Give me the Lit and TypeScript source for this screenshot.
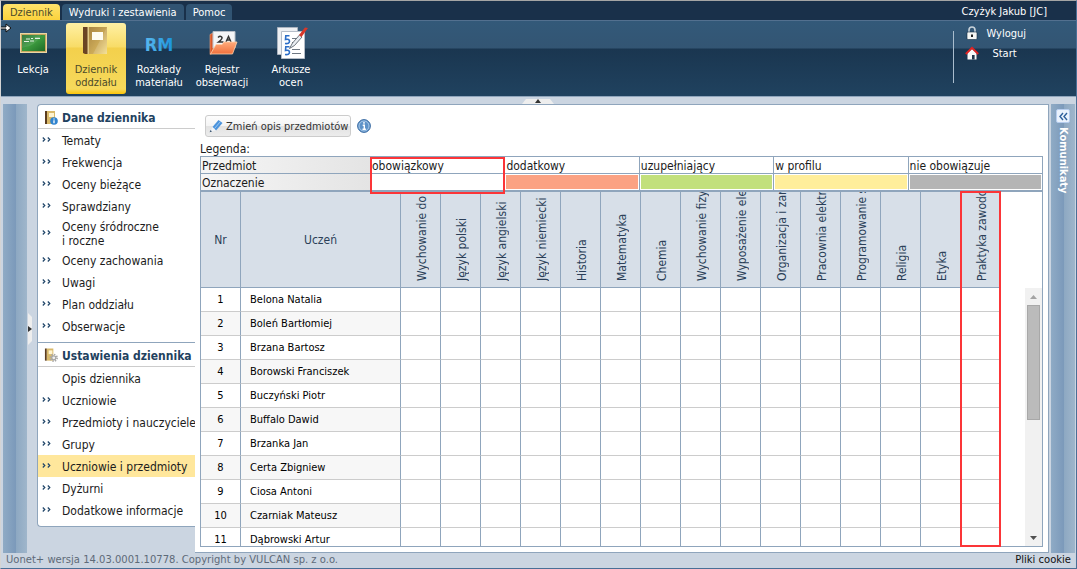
import { LitElement, html, css, svg } from "lit";
import { customElement, state } from "lit/decorators.js";
import { classMap } from "lit/directives/class-map.js";

const boardIcon = svg`<svg width="34" height="34" viewBox="0 0 34 34">
  <defs><linearGradient id="bg" x1="0" y1="0" x2="1" y2="1"><stop offset="0" stop-color="#1f6a2c"/><stop offset=".5" stop-color="#3c9a3e"/><stop offset="1" stop-color="#1d6b26"/></linearGradient></defs>
  <rect x="4" y="7" width="27" height="20" fill="#c9a860"/><rect x="4.500" y="7.500" width="26" height="19" fill="none" stroke="#e8d6a4"/>
  <rect x="6" y="9" width="23" height="16" fill="url(#bg)"/><path d="M6 22Q20 20 25 9H6Z" fill="#fff" opacity=".1"/>
  <path d="M10 13h4m1-.5h2m2-.2h5M8 15.500h5m1-.5h4" stroke="#e5f2e4" stroke-width="1.200"/></svg>`;

const bookIcon = svg`<svg width="34" height="34" viewBox="0 0 34 34">
  <defs><linearGradient id="bk" x1="0" y1="0" x2="1" y2="1"><stop offset="0" stop-color="#a88442"/><stop offset=".6" stop-color="#cdab58"/><stop offset="1" stop-color="#f3dc86"/></linearGradient></defs>
  <path d="M4 1h5v27H6L4 27Z" fill="#6b4423"/><path d="M9 1h19v27H9Z" fill="url(#bk)"/><path d="M8.500 1h1.500v27H8.500Z" fill="#e3cb88"/>
  <path d="M28 1 14 28h14Z" fill="#fff" opacity=".15"/><rect x="13" y="6" width="11" height="8" fill="#fffdf2"/></svg>`;

const rmIcon = svg`<svg width="34" height="34" viewBox="0 0 34 34">
  <defs><linearGradient id="rm"><stop offset="0" stop-color="#5bb9ee"/><stop offset="1" stop-color="#1b93dc"/></linearGradient></defs>
  <text class="rm" x="17" y="25" text-anchor="middle" fill="url(#rm)">RM</text></svg>`;

const folderIcon = svg`<svg width="34" height="34" viewBox="0 0 34 34">
  <defs><linearGradient id="fo" x1="0" y1="0" x2="0" y2="1"><stop offset="0" stop-color="#ffab7c"/><stop offset="1" stop-color="#f0703c"/></linearGradient></defs>
  <path d="M5 8.500 8 7v20l-3 1.500Z" fill="#d9582a" stroke="#f3a27a" stroke-width=".6"/><path d="M8 5.500h22V22H8Z" fill="#f5f5f7" stroke="#b9bfc8"/>
  <path d="M13 11.500q2.500-2.500 4 0 .5 1.500-3.500 4.500h5M21 16l2.500-5.500L26 16m-4.500-2h4" fill="none" stroke="#333" stroke-width="1.500"/>
  <path d="M11 18.500h6l2-2.500h13l-4.500 12H5.500Z" fill="url(#fo)" stroke="#ffd0a8" stroke-width=".8"/></svg>`;

const sheetIcon = svg`<svg width="36" height="34" viewBox="0 0 36 34">
  <path d="M4.500 1.500h20v27h-20Z" fill="#eef0f3" stroke="#aab3bf"/><path d="M8.500 5.500h23v27h-23Z" fill="#fff" stroke="#b5bdc8"/>
  <path d="M16.500 9.800H12.800l-.3 3.700q4-1 4 1.800 0 2.700-4.500 2.200M16.500 20.800H12.800l-.3 3.700q4-1 4 1.800 0 2.700-4.500 2.200" fill="none" stroke="#2d6fc8" stroke-width="1.600"/>
  <path d="M19 12.500h7M19 16.500h5M19 23.500h8M19 27.500h9" stroke="#6f7883"/>
  <path d="m16.500 22.500 3-5.500 7-8 2.500 2-7.500 8.500Z" fill="#e9edf2" stroke="#4c5560" stroke-width=".8"/><path d="m26 9 6-7.500 3 .5L28.500 11Z" fill="#d8372a"/></svg>`;

const lockIcon = svg`<svg width="14" height="14" viewBox="0 0 14 14"><path d="M4 7V4a3 3 0 0 1 6 0V7" fill="none" stroke="#c8d2da" stroke-width="1.600"/>
  <rect x="2" y="6" width="10" height="7.500" rx="1.200" fill="#f6f6f4" stroke="#13283d" stroke-width=".6"/><rect x="6" y="8.500" width="2" height="2.500" fill="#222"/></svg>`;

const homeIcon = svg`<svg width="14" height="14" viewBox="0 0 14 14"><path d="M2.500 7 7 3l4.500 4v6.500h-9Z" fill="#f8f8f8"/><rect x="7" y="9" width="2.600" height="4.500" fill="#22364a"/>
  <path d="M.8 8 7 1.800 13.200 8" fill="none" stroke="#e22222" stroke-width="1.900"/></svg>`;

const infoBookIcon = svg`<svg width="14" height="14" viewBox="0 0 14 14"><rect x="1" y="0" width="2" height="13" fill="#5b3c1f"/><rect x="3" y="0" width="8" height="13" fill="#d9b96a"/><rect x="5" y="2" width="5" height="4" fill="#fff3cf"/>
  <circle cx="10" cy="10" r="3.800" fill="#2f83cf"/><path d="M10 7.500v1M10 9.300v3" stroke="#fff" stroke-width="1.300"/></svg>`;

const gearBookIcon = svg`<svg width="15" height="15" viewBox="0 0 15 15"><rect x="1" y="0" width="2" height="13" fill="#5b3c1f"/><rect x="3" y="0" width="7" height="13" fill="#d9b96a"/><rect x="5" y="2" width="4" height="4" fill="#fff3cf"/>
  <circle cx="10.500" cy="10" r="3.600" fill="none" stroke="#a8a8a8" stroke-width="1.800" stroke-dasharray="1.400 1.400"/><circle cx="10.500" cy="10" r="2.200" fill="#eee" stroke="#a4a4a4" stroke-width="1.300"/></svg>`;

const pencilIcon = svg`<svg width="14" height="14" viewBox="0 0 14 14"><path d="m3.500 8 6-7 4 3-6.500 7.500Z" fill="#4b93dc"/><path d="m5.500 9.500 6-7" stroke="#9cc9f3" stroke-width="1"/>
  <path d="m3.500 8-2 4.500 5.500-1Z" fill="#f1f4f8"/><path d="m1.600 11-1 2.300 2.400-.9Z" fill="#35516f"/></svg>`;

const infoIcon = svg`<svg width="14" height="14" viewBox="0 0 14 14"><circle cx="7" cy="7" r="6.400" fill="#5d92c8" stroke="#3d6da3"/><circle cx="7" cy="7" r="5" fill="none" stroke="#a9caea"/>
  <path d="M7 3v1.800M5.700 6.300H7.300v4M5.500 10.300h3.400" fill="none" stroke="#fff" stroke-width="1.400"/></svg>`;

const chevrons = svg`<svg width="9" height="5" viewBox="0 0 9 5"><path d="M.8.500 2.800 2.500.8 4.500M5.800.500 7.800 2.500 5.800 4.500" fill="none" stroke="#1f4468" stroke-width="1.200"/></svg>`;

const ribbonItems = [
  { icon: boardIcon, lines: ["Lekcja"] },
  { icon: bookIcon, lines: ["Dziennik", "oddziału"], active: true },
  { icon: rmIcon, lines: ["Rozkłady", "materiału"] },
  { icon: folderIcon, lines: ["Rejestr", "obserwacji"] },
  { icon: sheetIcon, lines: ["Arkusze", "ocen"], wide: true },
];

interface MenuItem { text: string; plain?: boolean; second?: string }
const menus: { title: string; icon: unknown; items: MenuItem[] }[] = [
  {
    title: "Dane dziennika",
    icon: infoBookIcon,
    items: [
      { text: "Tematy" }, { text: "Frekwencja" }, { text: "Oceny bieżące" }, { text: "Sprawdziany" },
      { text: "Oceny śródroczne", second: "i roczne" },
      { text: "Oceny zachowania" }, { text: "Uwagi" }, { text: "Plan oddziału" }, { text: "Obserwacje" },
    ],
  },
  {
    title: "Ustawienia dziennika",
    icon: gearBookIcon,
    items: [
      { text: "Opis dziennika", plain: true }, { text: "Uczniowie" }, { text: "Przedmioty i nauczyciele" },
      { text: "Grupy" }, { text: "Uczniowie i przedmioty" }, { text: "Dyżurni" }, { text: "Dodatkowe informacje" },
    ],
  },
];

const legend = [
  ["obowiązkowy", "required"], ["dodatkowy", "extra"], ["uzupełniający", "supplementary"],
  ["w profilu", "profile"], ["nie obowiązuje", "none"],
];

const subjects = [
  "Wychowanie do", "Język polski", "Język angielski", "Język niemiecki", "Historia", "Matematyka",
  "Chemia", "Wychowanie fizy", "Wyposażenie ele", "Organizacja i zarz", "Pracownia elektr",
  "Programowanie s", "Religia", "Etyka", "Praktyka zawodo",
];

const students = [
  "Belona Natalia", "Boleń Bartłomiej", "Brzana Bartosz", "Borowski Franciszek", "Buczyński Piotr",
  "Buffalo Dawid", "Brzanka Jan", "Certa Zbigniew", "Ciosa Antoni", "Czarniak Mateusz", "Dąbrowski Artur",
];

const base = css`
  * { box-sizing: border-box; }
  svg { display: block; flex: none; }
  button { font: inherit; color: inherit; background: none; border: 0; padding: 0; margin: 0; cursor: pointer; }
  a { color: inherit; text-decoration: none; }
`;

@customElement("app-ribbon")
export class AppRibbon extends LitElement {
  static styles = [base, css`
    :host { display: block; color: #fff; font-size: 11px; line-height: 13px; position: relative; }
    .tabs { display: flex; align-items: flex-end; gap: 2px; height: 20px; padding: 0 29px 0 2px; background: #19304a; border-bottom: 1px solid #53708f; }
    .tab { height: 16px; padding: 0 7px; border-radius: 4px 4px 0 0; background: #315473; }
    .tab.active { background: linear-gradient(#ffe36c, #fbd23c); color: #4b4a2a; }
    .user { margin-left: auto; align-self: center; padding-top: 2px; }
    .bar { display: flex; justify-content: space-between; height: 76px; padding: 2px 50px 0 2px; background: linear-gradient(#335979 0, #335573 27px, #1a3650 28px, #20425f 100%); border-bottom: 1px solid #8fa5bc; }
    .tools { display: flex; gap: 3px; }
    .tool { display: flex; flex-direction: column; align-items: center; width: 60px; height: 71px; border-radius: 3px; white-space: nowrap; }
    .tool.wide { width: 72px; }
    .tool.active { color: #4b4a2a; background: linear-gradient(#fff0a4 0, #f8dc67 24px, #f3d04c 25px, #f6d95b 66px, #fdc508 100%); }
    .icon { display: flex; align-items: center; height: 40px; }
    .rm { font: bold 18px "DejaVu Sans Condensed", "Noto Sans", sans-serif; }
    .session { display: flex; flex-direction: column; gap: 6px; height: 52px; margin-top: 8px; padding-left: 11px; border-left: 1px solid #a9bccd; }
    .session a { display: flex; align-items: center; gap: 7px; height: 14px; margin-top: -5px; margin-bottom: 5px; }
    .session a + a { gap: 13px; }
    .pointer { position: absolute; left: -1px; top: 22px; }
  `];

  render() {
    return html`
      <nav class="tabs">
        <button class="tab active">Dziennik</button>
        <button class="tab">Wydruki i zestawienia</button>
        <button class="tab">Pomoc</button>
        <span class="user">Czyżyk Jakub [JC]</span>
      </nav>
      <div class="bar">
        <div class="tools">
          ${ribbonItems.map(t => html`
            <button class=${classMap({ tool: true, active: !!t.active, wide: !!t.wide })}>
              <span class="icon">${t.icon}</span>
              ${t.lines.map(l => html`<span>${l}</span>`)}
            </button>`)}
        </div>
        <div class="session">
          <a href="#wyloguj">${lockIcon}Wyloguj</a>
          <a href="#start">${homeIcon}Start</a>
        </div>
      </div>
      <svg class="pointer" width="12" height="10" viewBox="0 0 12 10"><path d="M0 4h6V1l5 4-5 4V6H0Z" fill="#fff" stroke="#111"/></svg>
    `;
  }
}

@customElement("app-sidebar")
export class AppSidebar extends LitElement {
  @state() private current = "Uczniowie i przedmioty";

  static styles = [base, css`
    :host { display: block; font-size: 12px; line-height: 14px; color: #1b1b1b; }
    .panel { background: #fff; border: 1px solid #8fa5bc; border-right: 0; border-bottom: 0; border-radius: 4px 0 0 0; padding-bottom: 5px; white-space: nowrap; }
    .panel:last-child { border-bottom: 1px solid #8fa5bc; border-radius: 0 0 0 4px; }
    .title { display: flex; align-items: center; gap: 4px; height: 24px; margin: 0; padding: 2px 0 0 6px; border-bottom: 1px solid #ccc; font-size: 12px; color: #1f4260; }
    .title svg { width: 14px; }
    .item { display: flex; align-items: center; min-height: 22px; padding: 3px 0 1px 4px; }
    .item.current { background: #ffe79c; }
    .mark { flex: none; width: 20px; padding-bottom: 4px; }
  `];

  render() {
    return menus.map(m => html`
      <nav class="panel">
        <h2 class="title">${m.icon}${m.title}</h2>
        ${m.items.map(i => html`
          <a href="#" class=${classMap({ item: true, current: this.current === i.text })} @click=${(e: Event) => { e.preventDefault(); this.current = i.text; }}>
            <span class="mark">${i.plain ? "" : chevrons}</span>
            <span>${i.text}${i.second ? html`<br>${i.second}` : ""}</span>
          </a>`)}
      </nav>`);
  }
}

@customElement("subject-grid")
export class SubjectGrid extends LitElement {
  static styles = [base, css`
    :host { display: flex; flex-direction: column; min-height: 0; font-size: 12px; color: #1b1b1b; }
    .toolbar { display: flex; align-items: center; gap: 6px; padding: 10px 5px 6px; }
    .edit { display: flex; align-items: center; gap: 3px; height: 22px; padding: 0 2px 0 3px; border: 1px solid #ccc; border-radius: 3px; background: linear-gradient(#fdfdfd 0, #f4f4f4 50%, #e2e2e2 51%, #ececec 100%); font-size: 11px; color: #333; }
    .caption { line-height: 13px; }
    table { border-collapse: separate; border-spacing: 0; table-layout: fixed; }
    th, td { padding: 0; font-weight: normal; }
    .legend { width: 100%; border: 1px solid #8fa5bc; border-width: 1px 1px 1px 0; line-height: 14px; }
    .legend th, .legend td { height: 16px; padding: 1px 1px 0; text-align: left; border-left: 1px solid #8fa5bc; }
    .legend tr + tr > * { height: 17px; border-top: 1px solid #8fa5bc; }
    .legend .name { width: 170px; background: linear-gradient(90deg, #f6f6f6, #e4e4e4); }
    .legend td { padding: 1px; }
    .swatch { height: 14px; }
    .extra { background: #fba283; }
    .supplementary { background: #c2e07c; }
    .profile { background: #ffee9b; }
    .none { background: #b5b5b5; }
    .marked { position: relative; z-index: 1; }
    .marked::after { content: ""; position: absolute; left: -1px; right: -1px; top: 0; height: 33px; border: 2px solid #fb3538; }
    .grid { position: relative; flex: 1; display: flex; min-height: 0; border: 1px solid #8fa5bc; }
    .view { flex: 1; overflow: hidden; }
    .data { width: 800px; }
    .data th { height: 96px; background: #d7dfe8; color: #2b3f58; border-right: 1px solid #8fa5bc; border-bottom: 1px solid #8fa5bc; }
    .data .subject { vertical-align: bottom; padding: 0 0 6px 13px; }
    .vertical { display: block; width: 16px; height: 89px; line-height: 16px; writing-mode: vertical-rl; transform: rotate(180deg); white-space: nowrap; overflow: hidden; text-align: left; }
    .nr { width: 40px; }
    .student { width: 160px; }
    .data td { height: 24px; border-right: 1px solid #8fa5bc; border-bottom: 1px solid #ccc; font-size: 11px; color: #000; }
    .data td.nr { text-align: center; }
    .data td.student { padding-left: 9px; }
    .data tr:nth-child(even) .nr, .data tr:nth-child(even) .student { background: #f7f7f7; }
    .column-mark { position: absolute; left: 759px; top: -1px; bottom: -1px; width: 41px; border: 2px solid #fb3538; }
    .scroll { display: flex; flex-direction: column; align-items: center; width: 17px; margin-top: 96px; background: #f1f1f1; }
    .scroll button { display: flex; align-items: center; justify-content: center; width: 17px; height: 17px; }
    .thumb { width: 13px; height: 115px; background: #bbb; border: 1px solid #a8a8a8; }
    .scroll .down { margin-top: auto; }
  `];

  render() {
    return html`
      <div class="toolbar">
        <button class="edit">${pencilIcon}Zmień opis przedmiotów</button>
        ${infoIcon}
      </div>
      <div class="caption">Legenda:</div>
      <table class="legend">
        <tr>
          <th class="name" scope="row">Przedmiot</th>
          ${legend.map(([label, key]) => html`<th class=${key === "required" ? "marked" : ""} scope="col">${label}</th>`)}
        </tr>
        <tr>
          <th class="name" scope="row">Oznaczenie</th>
          ${legend.map(([, key]) => html`<td><div class="swatch ${key}"></div></td>`)}
        </tr>
      </table>
      <div class="grid">
        <div class="view">
          <table class="data">
            <thead>
              <tr>
                <th class="nr">Nr</th>
                <th class="student">Uczeń</th>
                ${subjects.map(s => html`<th class="subject"><span class="vertical">${s}</span></th>`)}
              </tr>
            </thead>
            <tbody>
              ${students.map((s, i) => html`<tr><td class="nr">${i + 1}</td><td class="student">${s}</td>${subjects.map(() => html`<td></td>`)}</tr>`)}
            </tbody>
          </table>
        </div>
        <div class="scroll">
          <button aria-label="W górę"><svg width="7" height="4" viewBox="0 0 7 4"><path d="M0 4 3.500 0 7 4Z" fill="#a3a3a3"/></svg></button>
          <div class="thumb"></div>
          <button class="down" aria-label="W dół"><svg width="7" height="4" viewBox="0 0 7 4"><path d="M0 0 3.500 4 7 0Z" fill="#505050"/></svg></button>
        </div>
        <div class="column-mark"></div>
      </div>
    `;
  }
}

@customElement("app-root")
export class AppRoot extends LitElement {
  static styles = [base, css`
    :host { display: flex; flex-direction: column; height: 100vh; box-sizing: border-box; overflow: hidden; background: #cbd5e1; font-family: "DejaVu Sans Condensed", "Noto Sans", sans-serif; border: 1px solid #4a6f96; border-top-color: #a5a5a5; border-left-color: #d4d4d4; }
    .body { flex: 1; display: flex; min-height: 0; padding: 7px 1px 0 2px; position: relative; }
    .strip { flex: none; width: 24px; background: linear-gradient(90deg, #8fabc5 0, #7b99ba 13px, #8da8c2 13px, #9fb6cb 24px); }
    .left { margin-right: 10px; }
    app-sidebar { flex: none; width: 158px; }
    .content { flex: 1; min-width: 0; display: flex; padding: 0 5px 5px 5px; background: #fff; border: 1px solid #8fa5bc; border-left: 0; }
    subject-grid { flex: 1; min-width: 0; }
    .right { display: flex; flex-direction: column; align-items: center; gap: 4px; margin-left: 2px; padding-top: 5px; color: #fff; font-size: 11px; font-weight: bold; }
    .expand { display: flex; align-items: center; justify-content: center; width: 14px; height: 14px; border-radius: 2px; background: #eaf2fd; border: 1px solid #b6cdee; }
    .vertical { writing-mode: vertical-rl; line-height: 14px; }
    .handle { position: absolute; }
    .handle.side { left: 27px; top: 216px; }
    .handle.top { left: calc(50% - 17px); top: 2px; }
    .footer { display: flex; justify-content: space-between; padding: 0 5px; height: 15px; line-height: 14px; font-family: "DejaVu Sans", sans-serif; font-size: 10px; color: #5e6a78; }
    .footer a { color: #111; }
  `];

  render() {
    return html`
      <app-ribbon></app-ribbon>
      <main class="body">
        <div class="strip left"></div>
        <app-sidebar></app-sidebar>
        <section class="content"><subject-grid></subject-grid></section>
        <aside class="strip right">
          <button class="expand" aria-label="Rozwiń"><svg width="9" height="9" viewBox="0 0 9 9"><path d="M4 1 1 4.500 4 8M8 1 5 4.500 8 8" fill="none" stroke="#2d5f9b" stroke-width="1.400"/></svg></button>
          <span class="vertical">Komunikaty</span>
        </aside>
        <svg class="handle side" width="4" height="32" viewBox="0 0 4 32"><path d="M0 0 4 4V28L0 32Z" fill="#eee"/><path d="M0 13 4 16 0 19Z" fill="#333"/></svg>
        <svg class="handle top" width="32" height="5" viewBox="0 0 32 5"><path d="M0 5 4 0H28L32 5Z" fill="#eee"/><path d="M13 4 16 0 19 4Z" fill="#333"/></svg>
      </main>
      <footer class="footer">
        <span>Uonet+ wersja 14.03.0001.10778. Copyright by VULCAN sp. z o.o.</span>
        <a href="#cookie">Pliki cookie</a>
      </footer>
    `;
  }
}
